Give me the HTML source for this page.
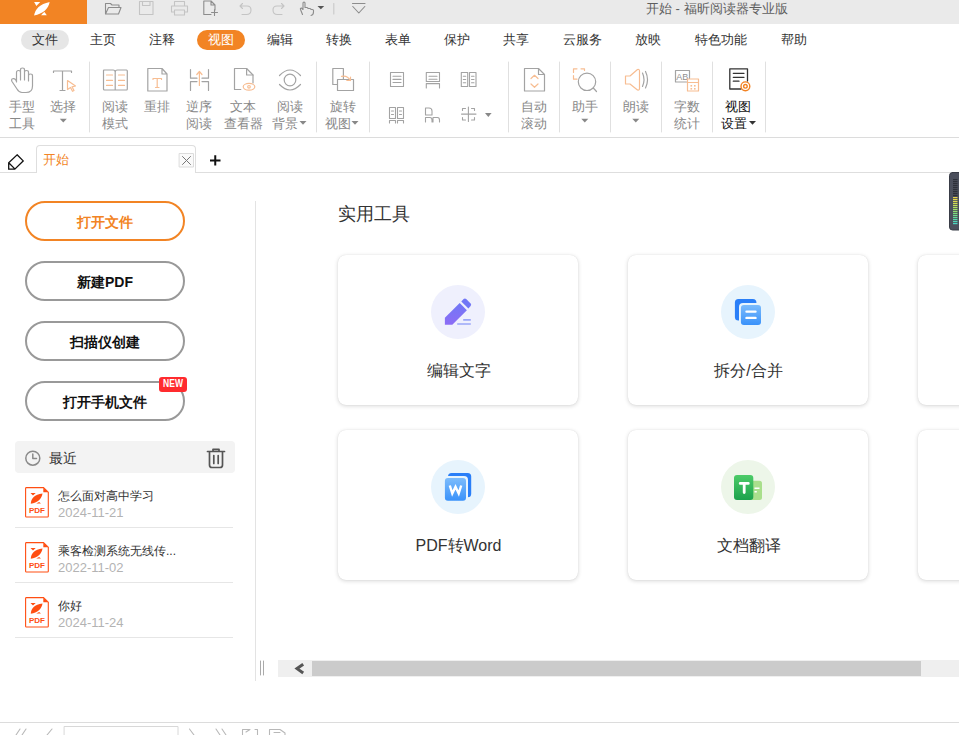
<!DOCTYPE html>
<html><head><meta charset="utf-8">
<style>
*{margin:0;padding:0;box-sizing:border-box}
html,body{width:959px;height:735px;overflow:hidden;background:#fff;font-family:"Liberation Sans",sans-serif;color:#333}
.a{position:absolute}
#title{left:0;top:0;width:959px;height:24px;background:#eaeaea}
#logo{left:0;top:0;width:87px;height:24px;background:#f28424}
.ttl{left:646px;top:0;height:17px;line-height:17px;font-size:13px;color:#5e5e5e;white-space:nowrap}
.mi{top:30px;height:20px;line-height:20px;font-size:13px;color:#333;white-space:nowrap}
.pill{border-radius:10px}
.rb{font-size:13px;line-height:17px;color:#888;text-align:center;white-space:nowrap}
.sep{width:1px;background:#e3e3e3;top:62px;height:70px}
.btn{left:25px;width:160px;height:40px;border:2px solid #999;border-radius:20px;text-align:center;line-height:38px;font-size:14px;font-weight:bold;color:#111}
.card{width:240px;height:150px;border-radius:8px;background:#fff;box-shadow:0 0 1px rgba(0,0,0,.12),0 1px 4px rgba(0,0,0,.16)}
.circ{width:54px;height:54px;border-radius:27px}
.clab{font-size:16px;line-height:20px;margin-top:1px;color:#333;text-align:center;white-space:nowrap}
.line{height:1px;background:#e6e6e6}
</style></head><body>
<!-- title bar -->
<div id="title" class="a"></div>
<div id="logo" class="a"></div>
<div class="a ttl">开始 - 福昕阅读器专业版</div>

<!-- menu -->
<div class="a pill" style="left:21px;top:30px;width:48px;height:20px;background:#e6e6e6"></div>
<div class="a mi" style="left:32px">文件</div>
<div class="a mi" style="left:90px">主页</div>
<div class="a mi" style="left:149px">注释</div>
<div class="a pill" style="left:197px;top:30px;width:48px;height:20px;background:#f28424"></div>
<div class="a mi" style="left:208px;color:#fff">视图</div>
<div class="a mi" style="left:267px">编辑</div>
<div class="a mi" style="left:326px">转换</div>
<div class="a mi" style="left:385px">表单</div>
<div class="a mi" style="left:444px">保护</div>
<div class="a mi" style="left:503px">共享</div>
<div class="a mi" style="left:563px">云服务</div>
<div class="a mi" style="left:635px">放映</div>
<div class="a mi" style="left:695px">特色功能</div>
<div class="a mi" style="left:781px">帮助</div>

<!-- ribbon -->
<div class="a line" style="left:0;top:137px;width:959px;background:#dcdcdc"></div>

<div class="a rb" style="left:9px;top:98px">手型</div>
<div class="a rb" style="left:9px;top:115px">工具</div>
<div class="a rb" style="left:50px;top:98px">选择</div>
<div class="a rb" style="left:102px;top:98px">阅读</div>
<div class="a rb" style="left:102px;top:115px">模式</div>
<div class="a rb" style="left:144px;top:98px">重排</div>
<div class="a rb" style="left:186px;top:98px">逆序</div>
<div class="a rb" style="left:186px;top:115px">阅读</div>
<div class="a rb" style="left:230px;top:98px">文本</div>
<div class="a rb" style="left:224px;top:115px">查看器</div>
<div class="a rb" style="left:277px;top:98px">阅读</div>
<div class="a rb" style="left:272px;top:115px">背景</div>
<div class="a rb" style="left:329.5px;top:98px">旋转</div>
<div class="a rb" style="left:324.5px;top:115px">视图</div>
<div class="a rb" style="left:521px;top:98px">自动</div>
<div class="a rb" style="left:521px;top:115px">滚动</div>
<div class="a rb" style="left:572px;top:98px">助手</div>
<div class="a rb" style="left:623px;top:98px">朗读</div>
<div class="a rb" style="left:674px;top:98px">字数</div>
<div class="a rb" style="left:674px;top:115px">统计</div>
<div class="a rb" style="left:725px;top:98px;color:#111">视图</div>
<div class="a rb" style="left:721px;top:115px;color:#111">设置</div>
<!-- tab bar -->
<div class="a line" style="left:0;top:172px;width:959px;background:#dedede"></div>
<div class="a" style="left:36px;top:145px;width:160px;height:28px;border:1px solid #dedede;border-bottom:none;border-radius:4px 4px 0 0;background:#fff"></div>
<div class="a" style="left:43px;top:151px;font-size:13px;line-height:17px;color:#f28424">开始</div>


<!-- left panel -->
<div class="a btn" style="top:201px;border-color:#f28424;color:#f28424">打开文件</div>
<div class="a btn" style="top:261px">新建PDF</div>
<div class="a btn" style="top:321px">扫描仪创建</div>
<div class="a btn" style="top:381px">打开手机文件</div>
<div class="a" style="left:159px;top:377px;width:28px;height:15px;background:#ff2b2e;border-radius:3px"></div><div class="a" style="left:159px;top:376px;width:28px;height:15px;color:#fff;font-size:10px;font-weight:bold;line-height:15px;text-align:center;transform:scaleX(.85)">NEW</div>

<div class="a" style="left:15px;top:441px;width:220px;height:32px;background:#f3f3f3;border-radius:4px"></div>
<div class="a" style="left:49px;top:449px;font-size:14px;line-height:18px;color:#333">最近</div>

<div class="a line" style="left:15px;top:527px;width:218px"></div>
<div class="a line" style="left:15px;top:582px;width:218px"></div>
<div class="a line" style="left:15px;top:637px;width:218px"></div>

<div class="a" style="left:58px;top:489px;font-size:12px;line-height:15px;color:#333;white-space:nowrap">怎么面对高中学习</div>
<div class="a" style="left:58px;top:505px;font-size:13px;line-height:15px;color:#b3b3b3;white-space:nowrap">2024-11-21</div>
<div class="a" style="left:58px;top:544px;font-size:12px;line-height:15px;color:#333;white-space:nowrap">乘客检测系统无线传...</div>
<div class="a" style="left:58px;top:560px;font-size:13px;line-height:15px;color:#b3b3b3;white-space:nowrap">2022-11-02</div>
<div class="a" style="left:58px;top:599px;font-size:12px;line-height:15px;color:#333;white-space:nowrap">你好</div>
<div class="a" style="left:58px;top:615px;font-size:13px;line-height:15px;color:#b3b3b3;white-space:nowrap">2024-11-24</div>
<div class="a" style="left:255px;top:201px;width:1px;height:480px;background:#e3e3e3"></div>

<!-- right -->
<div class="a" style="left:338px;top:203px;font-size:18px;line-height:22px;color:#333">实用工具</div>
<div class="a card" style="left:338px;top:255px"></div>
<div class="a card" style="left:628px;top:255px"></div>
<div class="a card" style="left:918px;top:255px"></div>
<div class="a card" style="left:338px;top:430px"></div>
<div class="a card" style="left:628px;top:430px"></div>
<div class="a card" style="left:918px;top:430px"></div>

<div class="a clab" style="left:338px;top:360px;width:241px">编辑文字</div>
<div class="a clab" style="left:628px;top:360px;width:241px">拆分/合并</div>
<div class="a clab" style="left:338px;top:535px;width:241px">PDF转Word</div>
<div class="a clab" style="left:628px;top:535px;width:241px">文档翻译</div>
<div class="a" style="left:278px;top:660px;width:681px;height:17px;background:#efefef"></div>
<div class="a" style="left:312px;top:661px;width:609px;height:15px;background:#cbcbcb"></div>

<div class="a line" style="left:0;top:722px;width:959px;background:#dcdcdc"></div>

<svg class="a" style="left:0;top:0" width="959" height="735" viewBox="0 0 959 735" fill="none" stroke-linecap="round" stroke-linejoin="round">
<!-- logo -->
<g fill="#fff" stroke="none">
<path d="M34.1 1.9 L40.2 1.9 L36.4 5.9 Z"/>
<path d="M34.1 15.6 C35 9 40 4 49.6 2 C48.5 9 43 13.5 34.1 15.6 Z"/>
<path d="M41.1 15.2 L46.8 15.2 L44.5 12 C43.5 12.8 42.3 13.6 41.1 15.2 Z"/>
</g>
<!-- quick access -->
<g stroke="#8c8c8c" stroke-width="1.1">
<path d="M105.5 14 V3.5 H110.5 L112 5 H119 V7.5 M105.5 14 L108.5 7.5 H121 L118.5 14 Z"/>
<path d="M203.8 1 H211 L215 5 V10 M211 1 V5 H215 M203.8 1 V14.5 H211 M214.5 9.5 V15.5 M211.5 12.5 H217.5"/>
<path d="M302.5 14.5 L300.5 9.5 Q300 8 301.5 8 L303 9.5 V3 Q303 2 304 2 Q305 2 305 3 V7.5 H307 Q308 7.5 308 8.5 H310 Q311 8.5 311 9.5 H312.5 Q313.5 9.5 313.5 10.5 V12 Q313.5 15 311 15.5"/>
<path d="M333.8 3.5 V14" stroke="#c8c8c8"/>
<path d="M352.5 3.5 H365 M352.8 6.5 L358.8 13 L364.8 6.5"/>
</g>
<path d="M317.5 6 H324.2 L320.85 9.2 Z" fill="#555"/>
<g stroke="#c4c4c4" stroke-width="1.1">
<path d="M139.5 1.5 H153 V14.5 H139.5 Z M142.5 1.5 V5.5 H150 V1.5"/>
<path d="M174.5 6 V1.5 H184.5 V6 M171.5 12 V6 H187.5 V12 H184.5 M174.5 10 H184.5 V15 H174.5 Z M171.5 12 H174.5"/>
<path d="M240 6 H247 Q251 6 251 10 Q251 14.5 246.5 14.5 H242 M240 6 L242.5 3.5 M240 6 L242.5 8.5"/>
<path d="M284 6 H277 Q273 6 273 10 Q273 14.5 277.5 14.5 H282 M284 6 L281.5 3.5 M284 6 L281.5 8.5"/>
</g>

<!-- ribbon big icons -->
<g stroke="#a3a3a3" stroke-width="1.2">
<path d="M16.5 82 V72.5 Q16.5 70.5 18.5 70.5 Q20.5 70.5 20.5 72.5 V80 M20.5 72.5 V69.8 Q20.5 68 22.5 68 Q24.5 68 24.5 69.8 V80 M24.5 72.3 Q24.5 70.5 26.5 70.5 Q28.5 70.5 28.5 72.3 V81 M28.5 75.8 Q28.5 74 30.5 74 Q32.5 74 32.5 75.8 V86 Q32.5 92.5 26 92.5 H22 Q19 92.5 17 89 L12 81.5 Q11 79.5 12.5 78.8 Q14 78 15.5 79.5 L16.5 81.5"/>
<path d="M53.5 72.5 V71 H71.5 V72.5 M62.5 71 V90.5 M60 90.5 H65"/>
<path d="M104 70 H113 Q115.2 70 115.2 72 V90 H104.5 Q103.5 90 103.5 89 V70.5 Z M115.2 72 Q115.2 70 117.5 70 H126.5 Q127.3 70 127.3 71 V89 Q127.3 90 126.5 90 H115.2"/>
<path d="M147.8 68.5 H162 L167 74 V91 H147.8 Z M162 68.5 V74 H167"/>
<path d="M190.5 69.5 V78.2 H197 M190.5 90.5 V81.6 H197 M208.5 69.5 V78.2 H202 M208.5 90.5 V81.6 H202"/>
<path d="M240.8 89.5 H234.5 V68.5 H246.6 L253 75 V83"/>
<path d="M246.6 68.5 V75 H253"/>
<path d="M279.5 75.5 Q290 64.5 300.5 75.5 M279.5 84.5 Q290 95.5 300.5 84.5"/>
<circle cx="290" cy="80" r="5.8"/>
<path d="M337.2 84.5 H332.8 V68.5 H343.4 V79.5 M337.5 79.5 H353.5 V90.5 H337.5 Z"/>
<path d="M524.5 68.5 H538.5 L544.5 74.5 V91 H524.5 Z M538.5 68.5 V74.5 H544.5"/>
<circle cx="587" cy="81.8" r="8.7"/>
<path d="M593.3 88 L596.5 91.5"/>
<path d="M642.5 73 Q645.5 79.5 642.5 86.5 M645.5 71.5 Q649.5 79.5 645.5 88"/>
<path d="M686.5 82 H675.5 V70.5 H689.5 V78.5"/>
</g>
<text x="676.3" y="80.3" font-family="Liberation Sans" font-size="9.5" fill="#8f8f8f" stroke="none" textLength="12" lengthAdjust="spacingAndGlyphs">AB</text>
<g stroke="#f7bd92" stroke-width="1.2">
<path d="M67.5 80.5 L75.5 86 L72 86.8 L74 90.5 L72.5 91.3 L70.5 87.5 L67.5 89.5 Z"/>
<path d="M106.5 75 H112.5 M106.5 80.4 H112.5 M106.5 85.4 H112.5 M118.5 75 H124.5 M118.5 80.4 H124.5 M118.5 85.4 H124.5"/>
<path d="M153 78.5 H161.5 M153 78.5 V79.5 M161.5 78.5 V79.5 M157.2 78.5 V87.5 M155.5 87.5 H159"/>
<path d="M199.4 85.5 V71.5 M196.8 74.5 L199.4 71.5 L202 74.5"/>
<ellipse cx="249" cy="86.8" rx="5.8" ry="3.4"/>
<circle cx="249" cy="86.8" r="1.3"/>
<path d="M341.5 76.3 Q347.5 75 350.3 80.5 M346.8 80.5 H350.5 V77"/>
<path d="M531 78.5 L534.5 75.3 L538 78.5 M531 84 L534.5 87.3 L538 84"/>
<path d="M573.5 72.5 V68.8 H577 M581 68.8 H584.5 V70.5 M573.5 75.5 V79.2 H577"/>
<path d="M625.5 76 H630 L637.5 69.5 Q639.5 69 639.5 71 V88.5 Q639.5 90.5 637.5 90 L630 84 H625.5 Z"/>
<path d="M687.5 79 H698.5 V91 H687.5 Z M687.5 82.5 H698.5"/>
</g>
<g fill="#f7bd92" stroke="none">
<rect x="690.5" y="85" width="1.6" height="1.6"/><rect x="694" y="85" width="1.6" height="1.6"/>
<rect x="690.5" y="88" width="1.6" height="1.6"/><rect x="694" y="88" width="1.6" height="1.6"/>
</g>
<g stroke="#333" stroke-width="1.3">
<path d="M741 89 H729.8 V68.8 H747.5 V81"/>
<path d="M733.3 73.3 H744 M733.3 77.3 H744 M733.3 81.2 H739"/>
</g>
<g stroke="#f28222" stroke-width="1.4">
<circle cx="745.4" cy="86.3" r="4.4"/>
<circle cx="745.4" cy="86.3" r="1.8"/>
</g>

<!-- small grid icons -->
<g stroke="#a3a3a3" stroke-width="1.1">
<path d="M390.5 72.5 H403.5 V86.5 H390.5 Z M393 76.3 H401 M393 79.4 H401 M393 82.5 H401"/>
<path d="M426.3 72.5 H439.5 V81.5 H426.3 Z M429 76.3 H437 M429 79.3 H437 M426.3 88 V83.6 H439.5 V88"/>
<path d="M461.3 72.5 H467.7 V86.5 H461.3 Z M469.5 72.5 H476 V86.5 H469.5 Z M463.3 76.3 H465.7 M463.3 79.5 H465.7 M463.3 82.7 H465.7 M471.5 76.3 H474 M471.5 79.5 H474 M471.5 82.7 H474"/>
<path d="M389.5 107.5 H395.5 V118.5 H389.5 Z M397.5 107.5 H403.5 V118.5 H397.5 Z M391.5 111 H393.5 M391.5 114.5 H393.5 M399.5 111 H401.5 M399.5 114.5 H401.5 M389.5 123 V120.5 H395.5 V123 M397.5 123 V120.5 H403.5 V123"/>
<path d="M425.5 115 V108 H429 Q432 108 432 111 V115 Z M425.5 122 V117.5 H430 Q432 117.5 432 120 V122 M433 122 V117.5 H437.5 Q439.5 117.5 439.5 120 V122"/>
<path d="M461.5 114.1 H476 M468.4 107 V121.5 M462.5 110.5 V108.5 H465.5 M471.5 108.5 H474.5 V110.5 M462.5 117.5 V120 H465.5 M471.5 120 H474.5 V117.5"/>
</g>
<path d="M485 113 H491.6 L488.3 117 Z" fill="#888"/>

<!-- dropdown arrows ribbon -->
<g fill="#888">
<path d="M59.8 118.8 H66.8 L63.3 122.5 Z"/>
<path d="M299.5 121 H306.5 L303 124.8 Z"/>
<path d="M351.5 121 H358.5 L355 124.8 Z"/>
<path d="M581.3 118.8 H588.3 L584.8 122.5 Z"/>
<path d="M632.3 118.8 H639.3 L635.8 122.5 Z"/>
<path d="M749 121 H756 L752.5 124.8 Z" fill="#333"/>
</g>

<!-- separators -->
<g stroke="#e0e0e0" stroke-width="1">
<path d="M89.5 62 V132 M316.5 62 V132 M369.5 62 V132 M508.5 62 V132 M559.5 62 V132 M610.5 62 V132 M661.5 62 V132 M712.5 62 V132 M765.5 62 V132"/>
</g>
</svg>

<svg class="a" style="left:0;top:0" width="959" height="735" viewBox="0 0 959 735" fill="none" stroke-linecap="round" stroke-linejoin="round">
<!-- tab bar -->
<path d="M17.1 154.8 L23.2 160.9 L14.8 169.2 H8.7 V162.8 Z M9.2 163.2 L14.6 168.6" stroke="#111" stroke-width="1.3" stroke-linejoin="miter"/>
<rect x="179.5" y="153.5" width="14" height="13.5" fill="#fafafa" stroke="#dcdcdc"/>
<path d="M182.5 156.5 L190.5 164.5 M190.5 156.5 L182.5 164.5" stroke="#777" stroke-width="1"/>
<path d="M210 160.4 H220.5 M215.25 155.3 V165.5" stroke="#111" stroke-width="2" stroke-linecap="butt"/>
<!-- recent header icons -->
<circle cx="32.8" cy="458.2" r="7" stroke="#8a8a8a" stroke-width="1.5"/>
<path d="M32.8 454 V458.5 H36.5" stroke="#8a8a8a" stroke-width="1.5"/>
<path d="M207.5 451.5 H224.5 M213 451.5 V449.3 H219 V451.5 M209.5 451.5 V465 Q209.5 467.5 212 467.5 H220 Q222.5 467.5 222.5 465 V451.5 M213.8 455.5 V463.5 M218.2 455.5 V463.5" stroke="#555" stroke-width="1.7"/>
<!-- card icons -->
<defs>
<linearGradient id="gp" x1="0" y1="0" x2="0" y2="1"><stop offset="0" stop-color="#7078f6"/><stop offset="1" stop-color="#8d6cf5"/></linearGradient>
<linearGradient id="gb" x1="0" y1="0" x2="0" y2="1"><stop offset="0" stop-color="#7cbcfc"/><stop offset="1" stop-color="#3a92fa"/></linearGradient>
<linearGradient id="gg" x1="0" y1="0" x2="0" y2="1"><stop offset="0" stop-color="#4ccb68"/><stop offset="1" stop-color="#1ca24d"/></linearGradient>
</defs>
<circle cx="458" cy="312" r="27" fill="#eff0fd"/>
<path d="M444.9 317.8 L459.7 303 L466.9 310.2 L452.3 324.8 H444.9 Z" fill="url(#gp)"/>
<path d="M461.3 301.4 L463.6 299.1 Q464.9 297.9 466.2 299.1 L470.6 303.5 Q471.8 304.8 470.6 306.1 L468.4 308.4 Z" fill="#7176f6"/>
<path d="M463.2 319.8 H470.8 M457.2 324 H470.8" stroke="#9ba6f8" stroke-width="1.7" stroke-linecap="butt"/>

<circle cx="748" cy="312" r="27" fill="#e7f4fd"/>
<rect x="734.9" y="298.9" width="21.5" height="21.5" rx="3.5" fill="#2a7ff8"/>
<rect x="739" y="303" width="24" height="24" rx="4" fill="#e7f4fd"/><rect x="740.9" y="304.9" width="20.1" height="20" rx="3" fill="url(#gb)"/>
<path d="M746.5 311.6 H755.5 M746.5 317.9 H755.5" stroke="#fff" stroke-width="2.4"/>

<circle cx="458" cy="487" r="27" fill="#e7f4fd"/>
<rect x="448" y="473" width="23.2" height="24.2" rx="3.5" fill="#2a7ff8"/>
<rect x="443" y="476" width="25" height="26.8" rx="4" fill="#e7f4fd"/><rect x="444.9" y="478" width="21.1" height="22.8" rx="3" fill="url(#gb)"/>
<path d="M449.8 485.5 L452.3 493.5 L455.5 486.8 L458.7 493.5 L461.2 485.5" stroke="#fff" stroke-width="2.4" stroke-linecap="butt" stroke-linejoin="miter"/>

<circle cx="748" cy="487" r="27" fill="#edf6e9"/>
<rect x="750" y="480.8" width="12" height="19.1" rx="2.5" fill="#a9df8c"/>
<rect x="734" y="475" width="19.3" height="24.9" rx="3" fill="url(#gg)"/>
<path d="M740.2 483.4 H748.3 M744.2 483.4 V492.5" stroke="#fff" stroke-width="2.8" stroke-linecap="round"/>
<path d="M754.5 488.3 H759.5 M754.5 491.7 H756.8" stroke="#fff" stroke-width="1.4" stroke-linecap="butt"/>

<!-- scrollbar -->
<path d="M260.5 661 V675 M263.5 661 V675" stroke="#aaa" stroke-width="1"/>
<path d="M303.2 664.2 L297 668.6 L303.2 673" stroke="#555" stroke-width="3" stroke-linecap="butt" stroke-linejoin="miter"/>

<!-- bottom nav -->
<g stroke="#b8b8b8" stroke-width="1.1">
<path d="M20 729 L16 735 M26 729 L22 735 M52 729 L47 735 M189.5 729 L194 735 M216 729 L220 735 M222 729 L226 735"/>
<path d="M242.5 735 V729.5 H250 M246 732 L250 729.5 M255 729.5 H257.5 V735 M269.5 735 V729.5 H280 L285 733 V735 M274 732.5 H280"/>
</g>
<rect x="64.5" y="726.5" width="113.5" height="12" fill="#fff" stroke="#d8d8d8"/>

<!-- right widget -->
<rect x="949.5" y="172.5" width="14" height="57.5" rx="3" fill="#4b4f5c" stroke="#393c46"/><rect x="953" y="179" width="4.5" height="1.2" fill="#2d3039"/><rect x="953" y="181" width="4.5" height="1.2" fill="#2d3039"/><rect x="953" y="183" width="4.5" height="1.2" fill="#2d3039"/><rect x="953" y="185" width="4.5" height="1.2" fill="#2d3039"/><rect x="953" y="187" width="4.5" height="1.2" fill="#2d3039"/><rect x="953" y="189" width="4.5" height="1.2" fill="#2d3039"/><rect x="953" y="191" width="4.5" height="1.2" fill="#2d3039"/><rect x="953" y="193" width="4.5" height="1.2" fill="#2d3039"/><rect x="953" y="195" width="4.5" height="1.2" fill="#2d3039"/><rect x="953" y="197" width="4.5" height="1.2" fill="#e8d248"/><rect x="953" y="199" width="4.5" height="1.2" fill="#e4d64a"/><rect x="953" y="201" width="4.5" height="1.2" fill="#dcda4e"/><rect x="953" y="203" width="4.5" height="1.2" fill="#cfdd54"/><rect x="953" y="205" width="4.5" height="1.2" fill="#c0df5a"/><rect x="953" y="207" width="4.5" height="1.2" fill="#b0e060"/><rect x="953" y="209" width="4.5" height="1.2" fill="#9fe068"/><rect x="953" y="211" width="4.5" height="1.2" fill="#8ee072"/><rect x="953" y="213" width="4.5" height="1.2" fill="#7ede7e"/><rect x="953" y="215" width="4.5" height="1.2" fill="#70dc8c"/><rect x="953" y="217" width="4.5" height="1.2" fill="#63da9a"/><rect x="953" y="219" width="4.5" height="1.2" fill="#58d8a8"/><rect x="953" y="221" width="4.5" height="1.2" fill="#50d6b6"/><rect x="953" y="223" width="4.5" height="1.2" fill="#4ad4c2"/></svg>
<svg class="a" style="left:25px;top:487px" width="24" height="31" viewBox="0 0 24 31">
<path d="M0.6 1.4 Q0.6 0.6 1.4 0.6 H18.5 L23.3 5.2 V29.2 Q23.3 30 22.5 30 H1.4 Q0.6 30 0.6 29.2 Z" fill="#fff" stroke="#ff4e12" stroke-width="1.1"/>
<path d="M18.3 0.8 L23.2 5.3 H18.3 Z" fill="#ff4e12"/>
<path d="M5.5 6 H10.7 L8 8.5 Z M5.8 16.8 C6 11.5 9.5 7 17.5 6.4 C17 11.5 12.5 15.5 5.8 16.8 Z M11.2 16.6 H16 L14.1 14.9 C13.2 15.4 12.2 15.9 11.2 16.6 Z" fill="#ff4e12"/>
<text x="12" y="26" text-anchor="middle" font-family="Liberation Sans" font-size="8" font-weight="bold" fill="#ff4e12">PDF</text>
</svg>
<svg class="a" style="left:25px;top:542px" width="24" height="31" viewBox="0 0 24 31">
<path d="M0.6 1.4 Q0.6 0.6 1.4 0.6 H18.5 L23.3 5.2 V29.2 Q23.3 30 22.5 30 H1.4 Q0.6 30 0.6 29.2 Z" fill="#fff" stroke="#ff4e12" stroke-width="1.1"/>
<path d="M18.3 0.8 L23.2 5.3 H18.3 Z" fill="#ff4e12"/>
<path d="M5.5 6 H10.7 L8 8.5 Z M5.8 16.8 C6 11.5 9.5 7 17.5 6.4 C17 11.5 12.5 15.5 5.8 16.8 Z M11.2 16.6 H16 L14.1 14.9 C13.2 15.4 12.2 15.9 11.2 16.6 Z" fill="#ff4e12"/>
<text x="12" y="26" text-anchor="middle" font-family="Liberation Sans" font-size="8" font-weight="bold" fill="#ff4e12">PDF</text>
</svg>
<svg class="a" style="left:25px;top:597px" width="24" height="31" viewBox="0 0 24 31">
<path d="M0.6 1.4 Q0.6 0.6 1.4 0.6 H18.5 L23.3 5.2 V29.2 Q23.3 30 22.5 30 H1.4 Q0.6 30 0.6 29.2 Z" fill="#fff" stroke="#ff4e12" stroke-width="1.1"/>
<path d="M18.3 0.8 L23.2 5.3 H18.3 Z" fill="#ff4e12"/>
<path d="M5.5 6 H10.7 L8 8.5 Z M5.8 16.8 C6 11.5 9.5 7 17.5 6.4 C17 11.5 12.5 15.5 5.8 16.8 Z M11.2 16.6 H16 L14.1 14.9 C13.2 15.4 12.2 15.9 11.2 16.6 Z" fill="#ff4e12"/>
<text x="12" y="26" text-anchor="middle" font-family="Liberation Sans" font-size="8" font-weight="bold" fill="#ff4e12">PDF</text>
</svg>
</body></html>
